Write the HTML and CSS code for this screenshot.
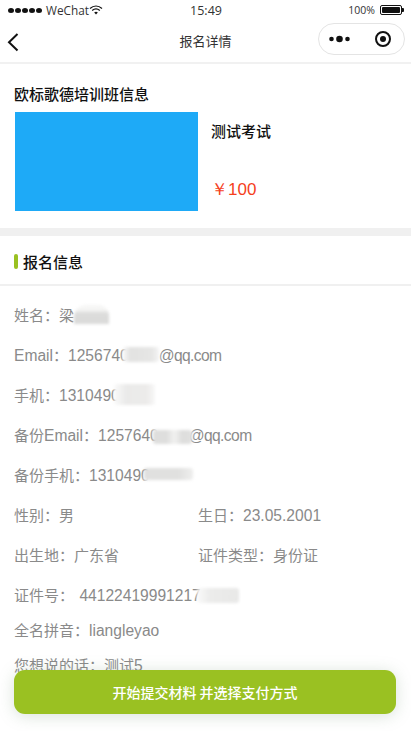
FILE: index.html
```html
<!DOCTYPE html>
<html lang="zh">
<head>
<meta charset="utf-8">
<title>报名详情</title>
<link rel="stylesheet" href="styles.css">
</head>
<body>
<div class="page">
  <div class="status">
    <div class="status-left">
      <span class="dots"><i></i><i></i><i></i><i></i><i></i></span>
      <span class="carrier">WeChat</span>
      <svg class="wifi" width="14" height="10" viewBox="0 0 14 10"><path d="M1 3.600C4.600.4 9.400.4 13 3.600" fill="none" stroke="#111" stroke-width="1.300"/><path d="M3.200 5.600c2.300-2 5.300-2 7.600 0" fill="none" stroke="#111" stroke-width="1.300"/><path d="M5.200 7.400c1-.9 2.600-.9 3.600 0L7 9.400z" fill="#111"/></svg>
    </div>
    <div class="time">15:49</div>
    <div class="status-right">
      <span>100%</span>
      <span class="battery"><b></b></span>
      <span class="nub"></span>
    </div>
  </div>
  <header class="nav">
    <svg class="back" width="14" height="20" viewBox="0 0 14 20"><path d="M11.500 2 3 10.200l8.500 8.300" fill="none" stroke="#111" stroke-width="2"/></svg>
    <div class="nav-title">报名详情</div>
    <div class="capsule">
      <svg width="26" height="10" viewBox="0 0 26 10"><circle cx="3.500" cy="5" r="2.300" fill="#111"/><circle cx="11.500" cy="5" r="3.300" fill="#111"/><circle cx="19.500" cy="5" r="2.300" fill="#111"/></svg>
      <svg width="18" height="18" viewBox="0 0 18 18"><circle cx="9" cy="9" r="7" fill="none" stroke="#111" stroke-width="2"/><circle cx="9" cy="9" r="3" fill="#111"/></svg>
    </div>
  </header>

  <section class="course">
    <h2 class="course-name">欧标歌德培训班信息</h2>
    <div class="course-body">
      <div class="cover"></div>
      <div class="course-info">
        <div class="exam">测试考试</div>
        <div class="price">￥100</div>
      </div>
    </div>
  </section>

  <h3 class="section-head"><span class="mark"></span>报名信息</h3>

  <section class="info">
    <div class="row"><span class="field">姓名：梁<i class="smudge s1"></i></span></div>
    <div class="row"><span class="field"><b>Email</b>：<b>1256740</b><i class="smudge s2"></i><b class="mail">@qq.com</b></span></div>
    <div class="row"><span class="field">手机：<b>1310490</b><i class="smudge s3"></i></span></div>
    <div class="row"><span class="field">备份<b>Email</b>：<b>1257640</b><i class="smudge s4"></i><b class="mail">@qq.com</b></span></div>
    <div class="row"><span class="field">备份手机：<b>1310490</b><i class="smudge s5"></i></span></div>
    <div class="row two"><span class="field">性别：男</span><span class="field">生日：<b>23.05.2001</b></span></div>
    <div class="row two"><span class="field">出生地：广东省</span><span class="field">证件类型：身份证</span></div>
    <div class="row short"><span class="field">证件号： <b class="idno">44122419991217</b><i class="smudge s6"></i></span></div>
    <div class="row short"><span class="field">全名拼音：<b>liangleyao</b></span></div>
    <div class="row short"><span class="field">您想说的话：测试<b>5</b></span></div>
  </section>

  <div class="cta-wrap">
    <button class="cta">开始提交材料 并选择支付方式</button>
  </div>
</div>
</body>
</html>
```
FILE: styles.css
```css
* { box-sizing: border-box; }
html, body { margin: 0; padding: 0; background: #fff; }
body {
  width: 411px;
  height: 731px;
  overflow: hidden;
  font-family: "Noto Sans CJK SC", sans-serif;
}
.page { position: relative; width: 411px; height: 731px; overflow: hidden; }

.status {
  height: 20px;
  display: grid;
  grid-template-columns: 1fr auto 1fr;
  align-items: center;
  padding: 0 7px 0 8px;
  font-size: 12px;
  color: #333;
  font-family: "Open Sans", "Liberation Sans", sans-serif;
}
.status-left { display: flex; align-items: center; gap: 5px; }
.dots { display: flex; gap: 1px; }
.dots i { width: 6px; height: 5px; border-radius: 50%; background: #111; }
.carrier { font-size: 11.800px; margin-left: -1px; }
.wifi { margin-left: -5px; }
.time { font-size: 12.500px; }
.status-right { display: flex; align-items: center; justify-content: flex-end; font-size: 10.500px; gap: 5px; }
.battery { display: block; width: 22px; height: 10px; border: 1px solid #111; border-radius: 2px; padding: 1px; }
.battery b { display: block; height: 100%; background: #111; border-radius: 1px; }
.nub { width: 2px; height: 4px; background: #111; margin-left: -5px; border-radius: 0 1px 1px 0; }

.nav {
  position: relative;
  height: 44px;
  display: flex;
  align-items: center;
  justify-content: center;
  border-bottom: 2px solid #f1f1f1;
}
.back { position: absolute; left: 6px; top: 12px; }
.nav-title { font-size: 13px; color: #333; margin-top: -1px; }
.capsule {
  position: absolute;
  left: 318px;
  top: 3px;
  width: 87px;
  height: 32px;
  border: 1px solid #e4e4e4;
  border-radius: 16px;
  display: flex;
  align-items: center;
  justify-content: space-between;
  padding: 0 12px 0 9px;
}

.course { padding: 20px 15px 17px; height: 164px; }
.course-name {
  margin: 0 0 0 -1px;
  height: 21px;
  line-height: 20px;
  font-size: 15px;
  font-weight: 500;
  color: #111;
}
.course-body { display: flex; gap: 13px; margin-top: 7px; }
.cover { width: 183px; height: 99px; background: #1eaaf7; flex: none; }
.course-info { display: flex; flex-direction: column; height: 99px; }
.exam { font-size: 15px; font-weight: 500; color: #111; line-height: 20px; margin-top: 9px; }
.price { font-family: "Liberation Sans", sans-serif; font-size: 17px; color: #f5401c; line-height: 20px; margin-top: 39px; }

.section-head {
  margin: 0;
  height: 58px;
  border-top: 8px solid #f0f0f0;
  border-bottom: 2px solid #f0f0f0;
  display: flex;
  align-items: center;
  gap: 5px;
  padding: 2px 0 0 14px;
  font-size: 15px;
  font-weight: 500;
  color: #111;
}
.mark { width: 4px; height: 15px; background: #9ac122; border-radius: 2px; }

.info { padding: 19px 14px 0; font-size: 15px; color: #8a8a8a; }
.row { height: 40px; display: flex; align-items: flex-start; white-space: nowrap; }
.row.short { height: 35px; }
.row.two { display: grid; grid-template-columns: 184px 1fr; }
.field { display: block; height: 20px; line-height: 20px; }
.field b { font-family: "Liberation Sans", sans-serif; font-size: 15.600px; font-weight: 400; }
.field .mail { letter-spacing: -.6px; }
.field .idno { margin-left: 2px; }
.smudge {
  display: inline-block;
  position: relative;
  vertical-align: top;
  filter: blur(1.500px);
  border-radius: 3px;
}
.s1 { width: 35px; height: 19px; top: 0; background: linear-gradient(#f6f6f5 0 25%, #dcdcdb 45%, #dadad9); border-radius: 12px 10px 0 0; }
.s2 { width: 36px; height: 15px; top: 2px; margin-left: -6px; background: linear-gradient(90deg, #f8f8f8, #e2e2e1 20%, #e6e6e5 80%, #f4f4f4); box-shadow: 0 3px 3px #fff; }
.s3 { width: 41px; height: 21px; top: -1px; margin-left: -6px; background: linear-gradient(90deg, #fafafa, #eaeae9 30%, #ecebea 80%, #f8f8f8); }
.s4 { width: 39px; height: 14px; top: 5px; margin: 0 -3px 0 -6px; background: linear-gradient(90deg, #dededd, #dededd 35%, #f1f1f0 55%, #dddddc 75%, #e0e0df); box-shadow: 0 -5px 4px #fff; }
.s5 { width: 49px; height: 12px; top: 3px; margin-left: -6px; background: linear-gradient(90deg, #e0e0df, #e0e0df 70%, #eeeeed); box-shadow: 0 6px 5px #fff; }
.s6 { width: 42px; height: 15px; top: 3px; margin-left: -4px; background: linear-gradient(90deg, #fafafa, #ececeb 30%, #e8e8e7); }

.cta-wrap {
  position: absolute;
  left: 0;
  right: 0;
  bottom: 17px;
  padding: 0 15px 0 14px;
}
.cta {
  display: block;
  width: 100%;
  height: 44px;
  border: 0;
  border-radius: 11px;
  background: #9ac122;
  color: #fff;
  font-size: 14px;
  font-weight: 500;
  font-family: "Noto Sans CJK SC", sans-serif;
  box-shadow: 0 2px 16px rgba(120, 150, 120, .28);
}
```
